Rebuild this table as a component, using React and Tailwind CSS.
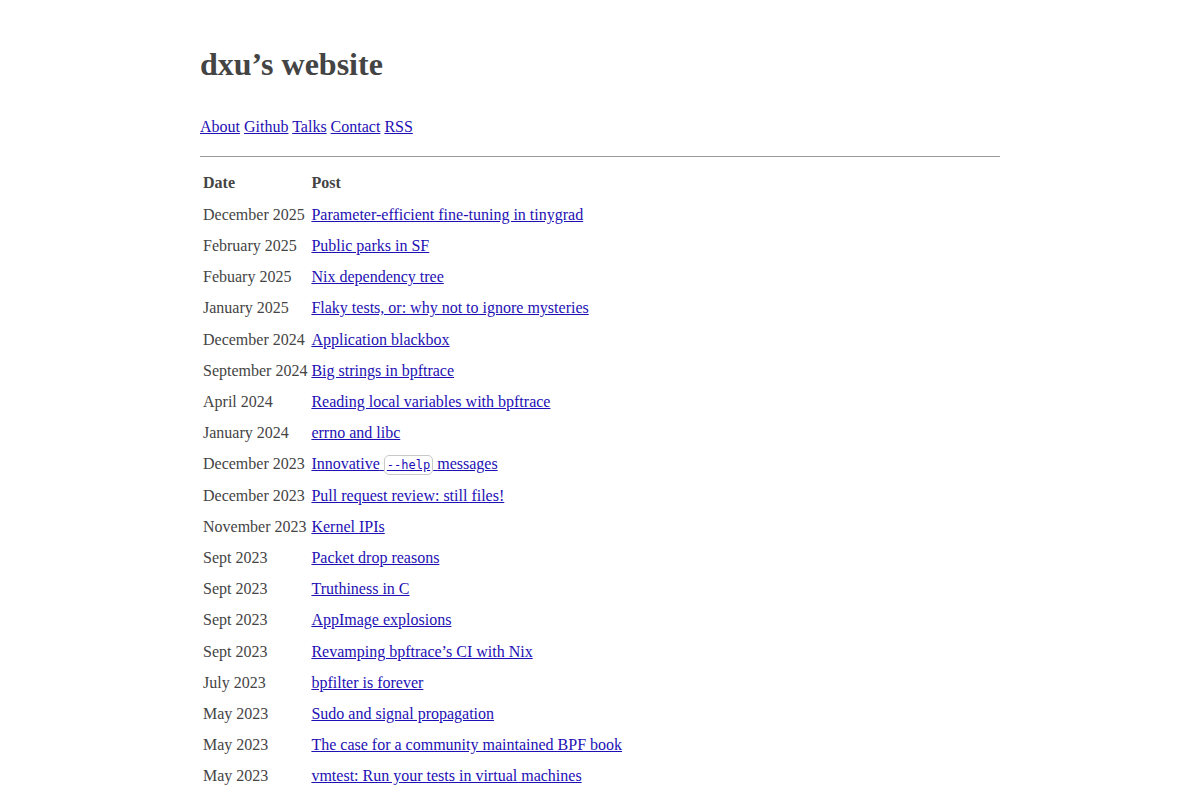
import React from "react";

const posts = [
  ["December 2025", "Parameter-efficient fine-tuning in tinygrad"],
  ["February 2025", "Public parks in SF"],
  ["Febuary 2025", "Nix dependency tree"],
  ["January 2025", "Flaky tests, or: why not to ignore mysteries"],
  ["December 2024", "Application blackbox"],
  ["September 2024", "Big strings in bpftrace"],
  ["April 2024", "Reading local variables with bpftrace"],
  ["January 2024", "errno and libc"],
  ["December 2023", "HELP"],
  ["December 2023", "Pull request review: still files!"],
  ["November 2023", "Kernel IPIs"],
  ["Sept 2023", "Packet drop reasons"],
  ["Sept 2023", "Truthiness in C"],
  ["Sept 2023", "AppImage explosions"],
  ["Sept 2023", "Revamping bpftrace’s CI with Nix"],
  ["July 2023", "bpfilter is forever"],
  ["May 2023", "Sudo and signal propagation"],
  ["May 2023", "The case for a community maintained BPF book"],
  ["May 2023", "vmtest: Run your tests in virtual machines"],
];

const link = "text-[#1d10b4] underline";

export default function App() {
  return (
    <div className="min-h-screen bg-white">
      <div
        className="mx-auto max-w-[800px] pt-[45px] text-[16px] leading-[1.7] text-[#444]"
        style={{ fontFamily: '"Liberation Serif", "Times New Roman", serif' }}
      >
        <h1 className="text-[32px] font-bold leading-[38px]">dxu’s website</h1>
        <nav className="mt-[30px]">
          <a href="#" className={link}>About</a>{" "}
          <a href="#" className={link}>Github</a>{" "}
          <a href="#" className={link}>Talks</a>{" "}
          <a href="#" className={link}>Contact</a>{" "}
          <a href="#" className={link}>RSS</a>
        </nav>
        <hr className="mt-[16px] border-t border-[#999]" />
        <table className="mt-[9px] border-separate border-spacing-[2px] leading-[27.18px]">
          <thead>
            <tr>
              <th className="px-[1px] pt-[1px] pb-[1.5px] text-left font-bold">Date</th>
              <th className="px-[1px] pt-[1px] pb-[1.5px] text-left font-bold">Post</th>
            </tr>
          </thead>
          <tbody>
            {posts.map(([d, t], i) => (
              <tr key={i}>
                <td className="p-[1px] whitespace-nowrap">{d}</td>
                <td className="p-[1px]">
                  {t === "HELP" ? (
                    <a href="#" className={link}>
                      Innovative{" "}
                      <code
                        className="rounded-[5px] border border-[#c8c8c8] px-[2px] py-[2px] text-[12px] leading-[16px]"
                        style={{ fontFamily: '"DejaVu Sans Mono", monospace' }}
                      >
                        --help
                      </code>{" "}
                      messages
                    </a>
                  ) : (
                    <a href="#" className={link}>{t}</a>
                  )}
                </td>
              </tr>
            ))}
          </tbody>
        </table>
      </div>
    </div>
  );
}
